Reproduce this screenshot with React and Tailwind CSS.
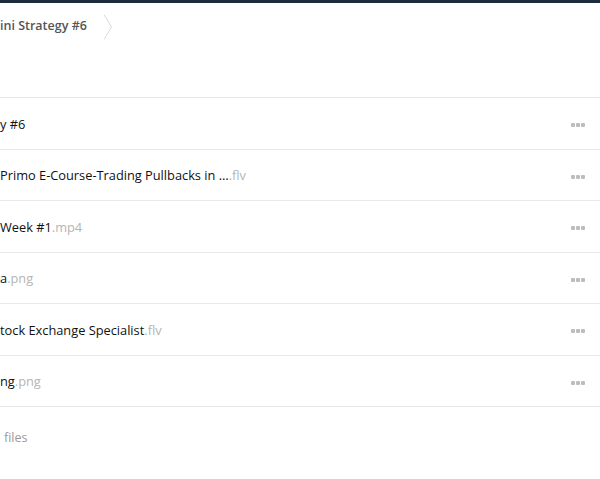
const rows = [
  { name: "y #6", ext: "" },
  { name: "Primo E-Course-Trading Pullbacks in …", ext: ".flv" },
  { name: "Week #1", ext: ".mp4" },
  { name: "a", ext: ".png" },
  { name: "tock Exchange Specialist", ext: ".flv" },
  { name: "ng", ext: ".png" },
];

const Dots = () => (
  <div className="flex gap-[1px] mt-[4px]">
    <span className="w-[4px] h-[4px] bg-[#bdbdbd] rounded-[1px]"></span>
    <span className="w-[4px] h-[4px] bg-[#bdbdbd] rounded-[1px]"></span>
    <span className="w-[4px] h-[4px] bg-[#bdbdbd] rounded-[1px]"></span>
  </div>
);

const App = () => {
  return (
    <div className="w-[600px] h-[479px] bg-white overflow-hidden font-['Open_Sans',sans-serif] text-[12.5px] font-normal">
      <div className="h-[3px] bg-[#1c2b3d]"></div>
      <div className="flex items-center h-[45px]">
        <span className="font-semibold text-[#555] mt-[1px]">ini Strategy #6</span>
        <svg width="10" height="26" viewBox="0 0 10 26" className="ml-[16px] mt-[2px]">
          <path d="M1 0.5 L8.5 13 L1 25.5" fill="none" stroke="#d9d9d9" strokeWidth="1" />
        </svg>
      </div>
      <div className="h-[50px] border-b border-[#e8e8e8]"></div>
      {rows.map((r, i) => (
        <div key={i} className="flex items-center justify-between h-[51.5px] border-b border-[#e8e8e8] pr-[15px]">
          <div className="text-[#111] text-[12.8px] mt-[2px]">
            {r.name}
            <span className="text-[#b5b5b5]">{r.ext}</span>
          </div>
          <Dots />
        </div>
      ))}
      <div className="h-[62px] flex items-center pl-[4px] text-[#9a9a9a]">files</div>
    </div>
  );
};

export default App;
